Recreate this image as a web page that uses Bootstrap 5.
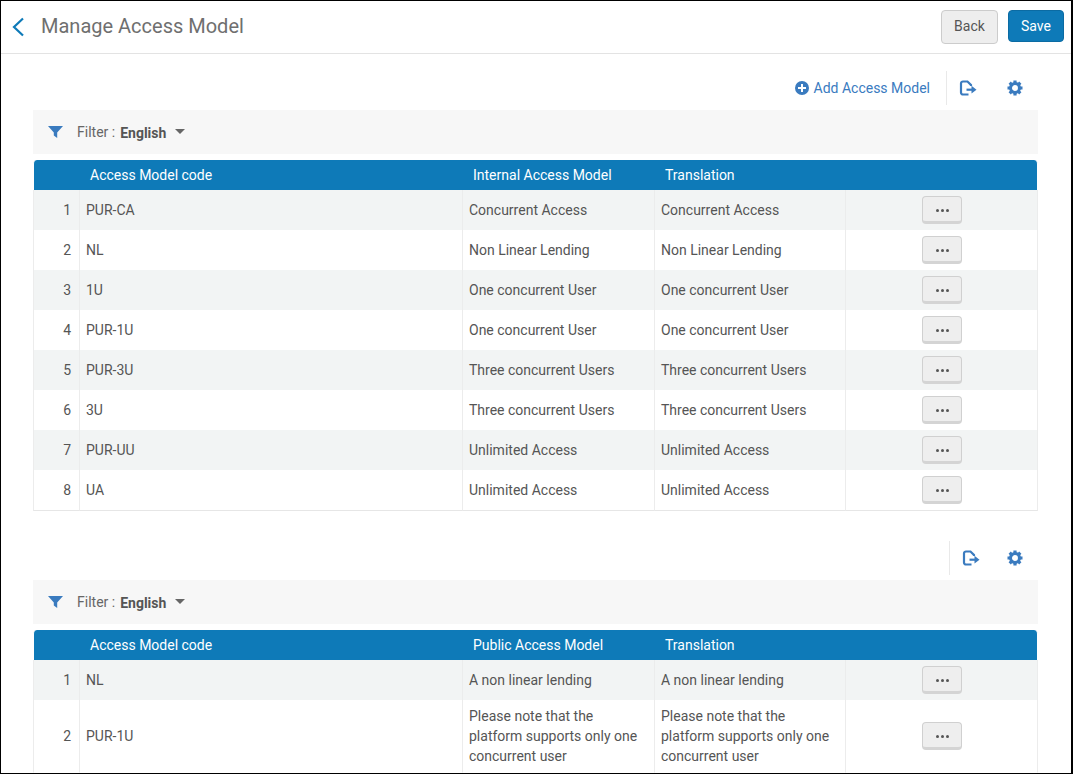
<!DOCTYPE html>
<html lang="en">
<head>
<meta charset="utf-8">
<title>Manage Access Model</title>
<link rel="stylesheet" href="https://cdn.jsdelivr.net/npm/bootstrap@5.3.0/dist/css/bootstrap.min.css">
<style>
html,body{margin:0;height:100%;overflow:hidden;background:#fff}
body{font-family:Roboto,"Liberation Sans",sans-serif;font-size:14px;color:#555}
.frame{height:774px;border:1px solid #000;border-right-width:2px;overflow:hidden;background:#fff}
.topbar{height:53px;border-bottom:1px solid #e3e3e3;padding:0 7px 0 9px}
.topbar h1{font-size:20px;font-weight:400;color:#6f6f6f;margin:0 0 2px 15px;line-height:24px}
.pbtn{font-size:14px;border-radius:4px;padding:0;line-height:30px}
.pbtn-back{width:57px;height:34px;background:#eee;border:1px solid #ccc;color:#555;padding-bottom:2px}
.pbtn-save{width:56px;height:32px;background:#0e7ab8;border:1px solid #0b6ba3;color:#fff;margin-bottom:2px}
.btnset{gap:10px;margin-top:-1px}
.content{padding:17px 35px 0 32px}
.tools{height:34px;color:#3a7bbf}
.tools-two{margin-top:30px}
.addlink{color:#3a7bbf;text-decoration:none;margin-right:16px;line-height:20px}
.addlink svg{margin-right:5px;vertical-align:-2px}
.vline{width:1px;height:34px;background:#e9e9e9}
.tool-ic{width:18px;height:18px;display:block}
.ic-export{margin-left:12px}
.ic-gear{margin-left:29px;margin-right:12px}
.tools-two .ic-gear{margin-left:26px}
.filterbar{height:44px;margin-top:5px;background:#f7f7f7;padding-left:15px;width:1005px}
.filterbar .lbl{margin-left:14px;color:#666}
.filterbar b{margin:2px 0 0 5px;color:#555;font-weight:700}
.filterbar .caret{margin-left:9px;width:0;height:0;border-left:5px solid transparent;border-right:5px solid transparent;border-top:5px solid #666;margin-top:-1px}
.gridtbl{table-layout:fixed;width:1005px;margin:6px 0 0;border-collapse:separate;border-spacing:0;font-size:14px;color:#555}
.gridtbl th{background:#0e7ab8;color:#fff;font-weight:400;height:30px;padding:0 0 0 10px;line-height:30px;border:0}
.gridtbl th:first-child{border-left:1px solid #fff;border-top-left-radius:4px}
.gridtbl th:last-child{border-right:1px solid #fff;border-top-right-radius:4px}
.gridtbl td{height:40px;padding:0 6px;line-height:20px;vertical-align:middle;border:0;border-right:1px solid #ececec;color:#555;background:#fff}
.gridtbl tr td:first-child{border-left:1px solid #ececec;text-align:right;padding-right:8px}
.gridtbl tbody tr:nth-child(odd) td{background:#f2f4f4;border-right-color:#ebecec}
.gridtbl tbody tr:last-child td{border-bottom:1px solid #e6e6e6;height:41px}
.gridtbl td.actcell{text-align:center;padding:0 0 0 1px}
.gridtbl td.tallcell{padding:6px}
.gridtbl-open tbody tr:last-child td{border-bottom-color:#fff;height:40px}
.gridtbl-open tbody tr:first-child td{border-bottom:0;height:40px}
.morebtn{width:40px;height:28px;padding:3px 0 0;background:#eee;border:1px solid #d0d0d0;border-bottom:3px solid #d4d4d4;border-radius:4px;display:inline-flex;align-items:center;justify-content:center;gap:2px;vertical-align:middle}
.morebtn i{display:block;width:3px;height:3px;border-radius:50%;background:#555}
</style>
</head>
<body>
<div class="frame">
  <div class="topbar d-flex align-items-center">
    <svg width="16" height="20" viewBox="0 0 16 20" aria-hidden="true"><path d="M13 1.500 4 10l9 8.500" fill="none" stroke="#0e7ab8" stroke-width="2.200"/></svg>
    <h1>Manage Access Model</h1>
    <div class="ms-auto d-flex align-items-start btnset">
      <button type="button" class="btn pbtn pbtn-back">Back</button>
      <button type="button" class="btn pbtn pbtn-save">Save</button>
    </div>
  </div>
  <div class="content">
    <div class="tools d-flex align-items-center justify-content-end">
      <a class="addlink" href="#"><svg width="14" height="14" viewBox="0 0 14 14" aria-hidden="true"><circle cx="7" cy="7" r="7" fill="#3a7bbf"/><path d="M7 3v8M3 7h8" stroke="#fff" stroke-width="2"/></svg>Add Access Model</a>
      <span class="vline"></span>
      <svg class="tool-ic ic-export" viewBox="0 0 18 18" aria-hidden="true"><path d="M9.500 15.500H4a2 2 0 0 1-2-2v-9a2 2 0 0 1 2-2h4.500l3.500 3.500V7" fill="none" stroke="#3a7bbf" stroke-width="2.200"/><path d="M7.500 10.700h5.500" stroke="#3a7bbf" stroke-width="2.200"/><path d="M12.500 6.800 17.500 10.700 12.500 14.600z" fill="#3a7bbf"/></svg>
      <svg class="tool-ic ic-gear" viewBox="0 0 18 18" aria-hidden="true"><path d="M9 1.500v3M9 13.500v3M1.500 9h3M13.500 9h3M3.700 3.700l2.100 2.100M12.200 12.200l2.100 2.100M14.300 3.700l-2.100 2.100M5.800 12.200l-2.100 2.100" stroke="#3a7bbf" stroke-width="3.200"/><circle cx="9" cy="9" r="4.500" fill="none" stroke="#3a7bbf" stroke-width="3"/></svg>
    </div>
    <div class="filterbar d-flex align-items-center">
      <svg width="15" height="12" viewBox="0 0 15 12" aria-hidden="true"><path d="M0 0h15L9.200 6.500V12L5.800 9.500v-3z" fill="#3a7bbf"/></svg>
      <span class="lbl">Filter :</span><b>English</b><span class="caret"></span>
    </div>
    <table class="gridtbl">
      <colgroup><col style="width:47px"><col style="width:383px"><col style="width:192px"><col style="width:191px"><col style="width:192px"></colgroup>
      <thead><tr><th></th><th>Access Model code</th><th>Internal Access Model</th><th>Translation</th><th></th></tr></thead>
      <tbody>
        <tr><td>1</td><td>PUR-CA</td><td>Concurrent Access</td><td>Concurrent Access</td><td class="actcell"><button type="button" class="morebtn" aria-label="More"><i></i><i></i><i></i></button></td></tr>
        <tr><td>2</td><td>NL</td><td>Non Linear Lending</td><td>Non Linear Lending</td><td class="actcell"><button type="button" class="morebtn" aria-label="More"><i></i><i></i><i></i></button></td></tr>
        <tr><td>3</td><td>1U</td><td>One concurrent User</td><td>One concurrent User</td><td class="actcell"><button type="button" class="morebtn" aria-label="More"><i></i><i></i><i></i></button></td></tr>
        <tr><td>4</td><td>PUR-1U</td><td>One concurrent User</td><td>One concurrent User</td><td class="actcell"><button type="button" class="morebtn" aria-label="More"><i></i><i></i><i></i></button></td></tr>
        <tr><td>5</td><td>PUR-3U</td><td>Three concurrent Users</td><td>Three concurrent Users</td><td class="actcell"><button type="button" class="morebtn" aria-label="More"><i></i><i></i><i></i></button></td></tr>
        <tr><td>6</td><td>3U</td><td>Three concurrent Users</td><td>Three concurrent Users</td><td class="actcell"><button type="button" class="morebtn" aria-label="More"><i></i><i></i><i></i></button></td></tr>
        <tr><td>7</td><td>PUR-UU</td><td>Unlimited Access</td><td>Unlimited Access</td><td class="actcell"><button type="button" class="morebtn" aria-label="More"><i></i><i></i><i></i></button></td></tr>
        <tr><td>8</td><td>UA</td><td>Unlimited Access</td><td>Unlimited Access</td><td class="actcell"><button type="button" class="morebtn" aria-label="More"><i></i><i></i><i></i></button></td></tr>
      </tbody>
    </table>
    <div class="tools tools-two d-flex align-items-center justify-content-end">
      <span class="vline"></span>
      <svg class="tool-ic ic-export" viewBox="0 0 18 18" aria-hidden="true"><path d="M9.500 15.500H4a2 2 0 0 1-2-2v-9a2 2 0 0 1 2-2h4.500l3.500 3.500V7" fill="none" stroke="#3a7bbf" stroke-width="2.200"/><path d="M7.500 10.700h5.500" stroke="#3a7bbf" stroke-width="2.200"/><path d="M12.500 6.800 17.500 10.700 12.500 14.600z" fill="#3a7bbf"/></svg>
      <svg class="tool-ic ic-gear" viewBox="0 0 18 18" aria-hidden="true"><path d="M9 1.500v3M9 13.500v3M1.500 9h3M13.500 9h3M3.700 3.700l2.100 2.100M12.200 12.200l2.100 2.100M14.300 3.700l-2.100 2.100M5.800 12.200l-2.100 2.100" stroke="#3a7bbf" stroke-width="3.200"/><circle cx="9" cy="9" r="4.500" fill="none" stroke="#3a7bbf" stroke-width="3"/></svg>
    </div>
    <div class="filterbar d-flex align-items-center">
      <svg width="15" height="12" viewBox="0 0 15 12" aria-hidden="true"><path d="M0 0h15L9.200 6.500V12L5.800 9.500v-3z" fill="#3a7bbf"/></svg>
      <span class="lbl">Filter :</span><b>English</b><span class="caret"></span>
    </div>
    <table class="gridtbl gridtbl-open">
      <colgroup><col style="width:47px"><col style="width:383px"><col style="width:192px"><col style="width:191px"><col style="width:192px"></colgroup>
      <thead><tr><th></th><th>Access Model code</th><th>Public Access Model</th><th>Translation</th><th></th></tr></thead>
      <tbody>
        <tr><td>1</td><td>NL</td><td>A non linear lending</td><td>A non linear lending</td><td class="actcell"><button type="button" class="morebtn" aria-label="More"><i></i><i></i><i></i></button></td></tr>
        <tr><td>2</td><td>PUR-1U</td><td class="tallcell">Please note that the platform supports only one concurrent user</td><td class="tallcell">Please note that the platform supports only one concurrent user</td><td class="actcell"><button type="button" class="morebtn" aria-label="More"><i></i><i></i><i></i></button></td></tr>
      </tbody>
    </table>
  </div>
</div>
<script src="https://cdn.jsdelivr.net/npm/bootstrap@5.3.0/dist/js/bootstrap.bundle.min.js"></script>
</body>
</html>
